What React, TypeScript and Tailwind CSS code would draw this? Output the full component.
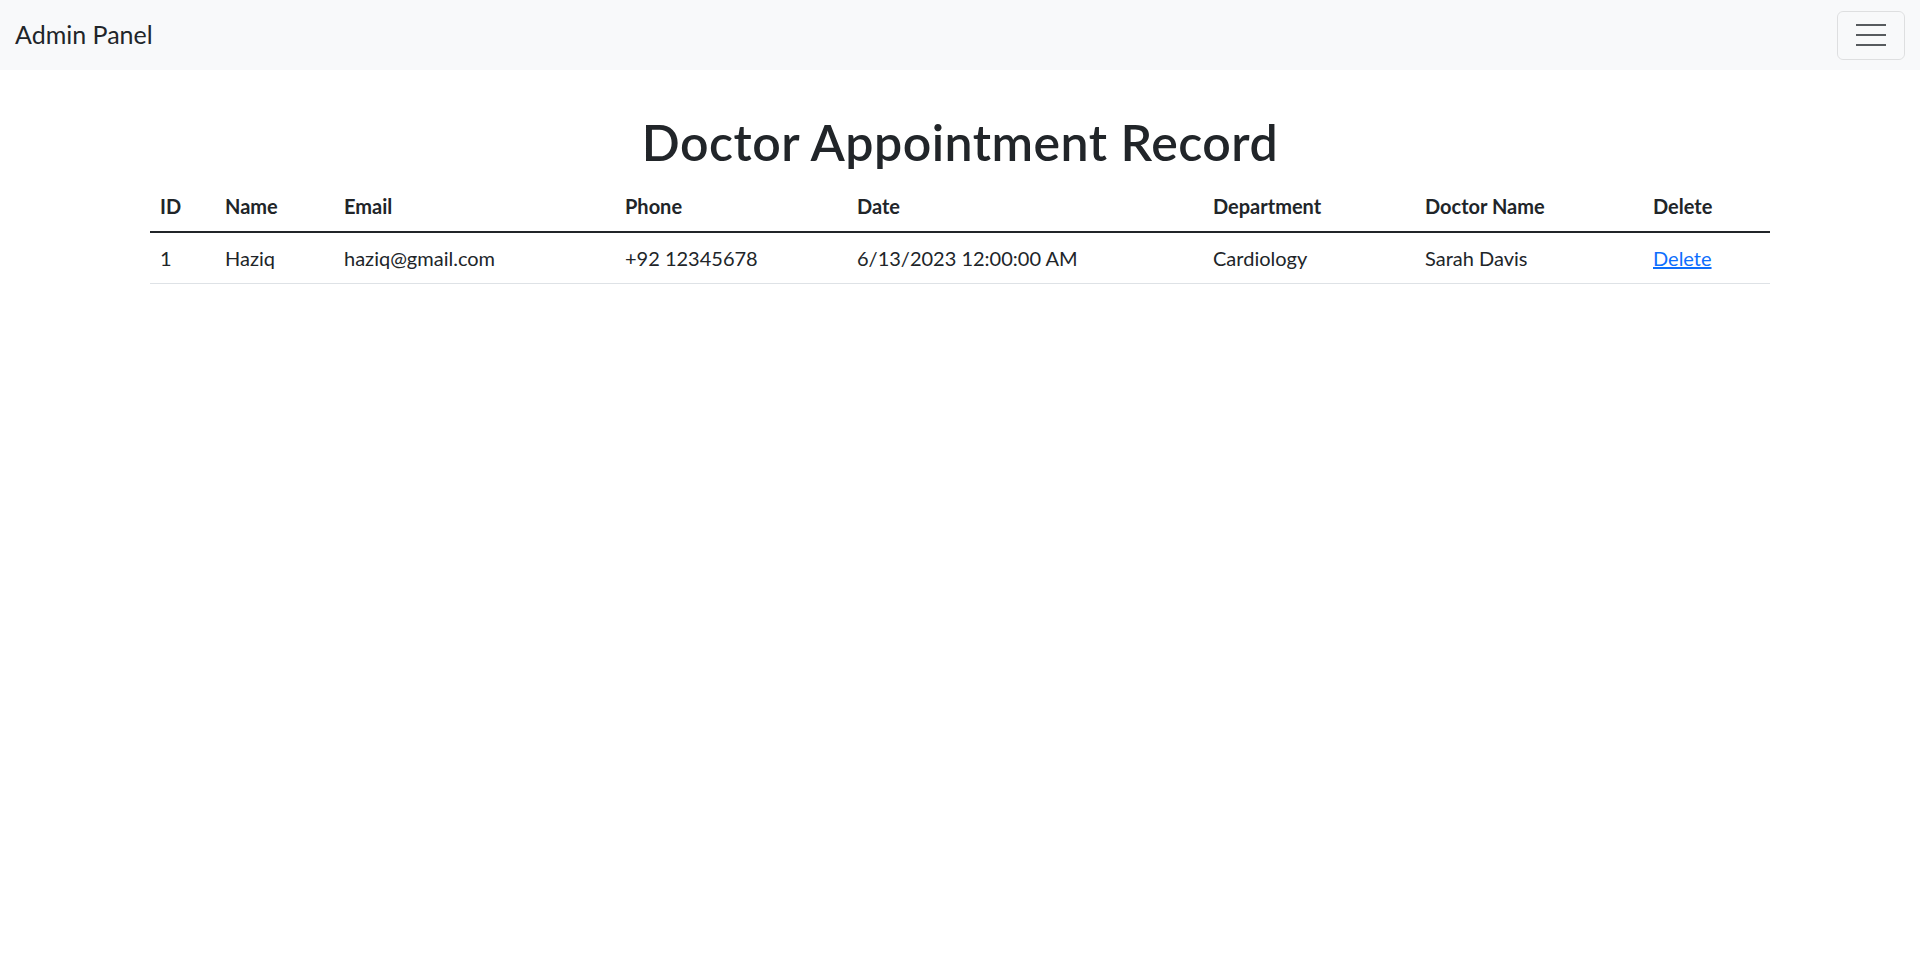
import React from 'react';

const columns = [
  { label: 'ID', width: 'w-[65px]' },
  { label: 'Name', width: 'w-[119px]' },
  { label: 'Email', width: 'w-[281px]' },
  { label: 'Phone', width: 'w-[232px]' },
  { label: 'Date', width: 'w-[356px]' },
  { label: 'Department', width: 'w-[212px]' },
  { label: 'Doctor Name', width: 'w-[228px]' },
  { label: 'Delete', width: 'w-[127px]' },
];

const appointments = [
  {
    id: 1,
    name: 'Haziq',
    email: 'haziq@gmail.com',
    phone: '+92 12345678',
    date: '6/13/2023 12:00:00 AM',
    department: 'Cardiology',
    doctor: 'Sarah Davis',
  },
];

const Navbar: React.FC = () => (
  <nav className="flex h-[70px] items-center justify-between bg-[#f8f9fa] px-[15px]">
    <a href="#" className="text-[25px] leading-[1.5] text-[#212529]">
      Admin Panel
    </a>
    <button
      type="button"
      className="flex h-[49px] w-[68px] items-center justify-center rounded-[6px] border border-[rgba(0,0,0,0.1)]"
    >
      <svg width="30" height="30" viewBox="0 0 30 30">
        <path
          d="M0 5h30M0 15h30M0 25h30"
          stroke="rgba(33,37,41,0.75)"
          strokeWidth="2"
          strokeLinecap="butt"
        />
      </svg>
    </button>
  </nav>
);

export default function App() {
  return (
    <div className="min-h-screen bg-white font-['Lato','Liberation_Sans',sans-serif] text-[20px] leading-[1.5] text-[#212529]">
      <Navbar />
      <div className="mx-auto w-[1650px] px-[15px]">
        <h1 className="mt-[42px] mb-[9px] text-center text-[50px] leading-[1.2] font-semibold tracking-[0.5px]">
          Doctor Appointment Record
        </h1>
        <table className="w-full table-fixed border-collapse text-left">
          <thead>
            <tr className="border-b-2 border-[#212529]">
              {columns.map((c) => (
                <th key={c.label} className={`${c.width} p-[10px] font-bold`}>
                  {c.label}
                </th>
              ))}
            </tr>
          </thead>
          <tbody>
            {appointments.map((a) => (
              <tr key={a.id} className="border-b border-[#dee2e6]">
                <td className="p-[10px]">{a.id}</td>
                <td className="p-[10px]">{a.name}</td>
                <td className="p-[10px]">{a.email}</td>
                <td className="p-[10px]">{a.phone}</td>
                <td className="p-[10px]">{a.date}</td>
                <td className="p-[10px]">{a.department}</td>
                <td className="p-[10px]">{a.doctor}</td>
                <td className="p-[10px]">
                  <a href="#" className="text-[#0d6efd] underline">
                    Delete
                  </a>
                </td>
              </tr>
            ))}
          </tbody>
        </table>
      </div>
    </div>
  );
}
